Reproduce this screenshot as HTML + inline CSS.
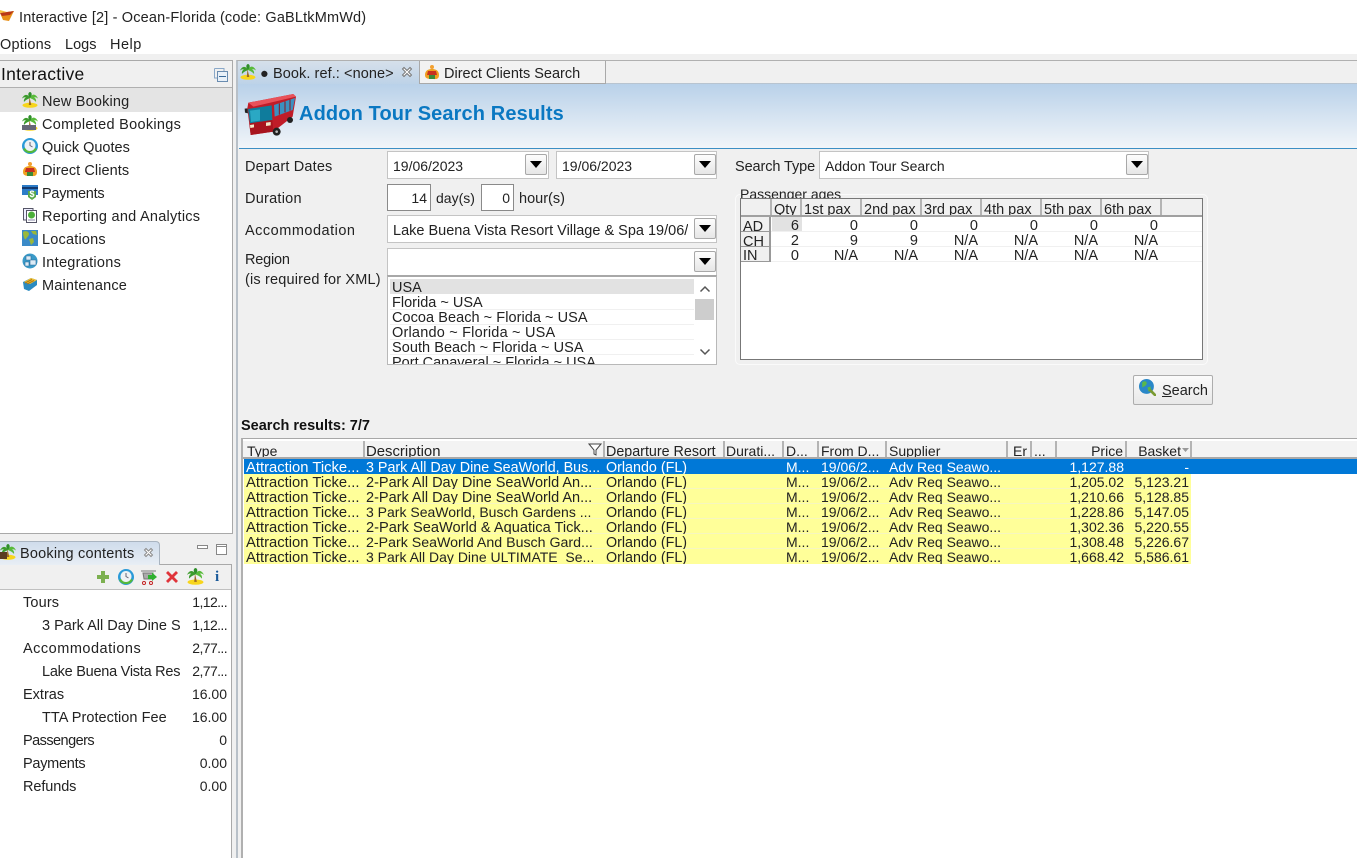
<!DOCTYPE html>
<html><head><meta charset="utf-8"><title>Interactive</title>
<style>
html,body{margin:0;padding:0;background:#fff}
#p{position:relative;width:1357px;height:858px;overflow:hidden;background:#fff;font:14.5px/18px "Liberation Sans",sans-serif;color:#222}
#p div{position:absolute;box-sizing:border-box}
.t{white-space:nowrap}
.r{text-align:right}
.n{font-size:14px;line-height:16px}
.ic{position:absolute}
.combo{background:#fff;border:1px solid #c4c4c4}
.btn{width:22px;height:21px;background:linear-gradient(#fdfdfd,#e6e6e6);border:1px solid #a8a8a8;border-radius:2px}
.btn:after{content:"";position:absolute;left:4px;top:6px;border-left:6px solid transparent;border-right:6px solid transparent;border-top:7px solid #000}
.row{left:0;height:15px;overflow:hidden;line-height:18px;white-space:nowrap}
.row.g{font-size:14px;line-height:16px}
.a{font-size:14.8px}
.row.g .a,.row.g div[style*="font-size"]{line-height:18px}
.hc{height:16px;overflow:hidden;line-height:22px;white-space:nowrap;top:0;border-right:2px solid #b4b4b4}
.hc.g{font-size:14px;line-height:20px}
.rh{left:0;top:0;width:30px;height:15px;background:#f0f0f0;border-right:2px solid #999;border-bottom:1px solid #999;padding-left:2px;line-height:20px;overflow:hidden}
</style></head><body>
<svg width="0" height="0" style="position:absolute">
<defs>
<symbol id="palm" viewBox="0 0 16 16">
<ellipse cx="8" cy="13.300" rx="7.500" ry="2.500" fill="#f7d51d"/>
<path d="M7.500 5 9.300 13H6.800Z" fill="#9c6a22"/>
<path d="M8 6C6 1.500 2 2 0 6.500 2 5 3 5 4 5.500 2.500 6 1.500 8 2 10 4 7.500 6 7 8 6Z" fill="#3c9c2c"/>
<path d="M8 6C10 1 14 2 16 6.500 14 5 13 5 12 5.500 13.500 6 14.500 8 14 10 12 7.500 10 7 8 6Z" fill="#58bb3a"/>
<path d="M8 6C5.500 3 6 .5 8 0 10 .5 10.500 3 8 6Z" fill="#2f8f2a"/>
</symbol>
<symbol id="clock" viewBox="0 0 16 16">
<circle cx="8" cy="8" r="8" fill="#2a9ad8"/>
<path d="M1 11A8 8 0 0 0 15 11L12 9.500A4.500 4.500 0 0 1 4 9.500Z" fill="#55b83a"/>
<circle cx="8" cy="7.500" r="5.500" fill="#eef2f5"/>
<path d="M8 4V7.500L10.500 9" stroke="#667" fill="none"/>
</symbol>
<symbol id="client" viewBox="0 0 16 16">
<circle cx="8" cy="3" r="2" fill="#f2a030"/>
<path d="M1 11C1 6 5 5 8 5S15 6 15 11 11 15 8 15 1 15 1 11Z" fill="#f0a020"/>
<path d="M4 7H12L13 11H3Z" fill="#c83020"/>
<path d="M5 11H11V15H5Z" fill="#3a8a3a"/>
</symbol>
<symbol id="pay" viewBox="0 0 16 16">
<path d="M0 1H16V11H0Z" fill="#2c7cc8"/>
<path d="M0 3H16V5H0Z" fill="#123a70"/>
<path d="M6 7H14V13L10 16 6 13Z" fill="#58a848"/>
<text x="10" y="13" font-size="9" font-weight="bold" text-anchor="middle" fill="#fff" font-family="Liberation Sans">$</text>
</symbol>
<symbol id="report" viewBox="0 0 16 16">
<path d="M1.500 1.500H11V13H1.500Z" fill="#eef" stroke="#556"/>
<path d="M4.500 3.500H14.500V15.500H4.500Z" fill="#fff" stroke="#556"/>
<circle cx="9.500" cy="8" r="3.500" fill="#4cb03a"/>
<path d="M6 13H13" stroke="#88a"/>
</symbol>
<symbol id="globe" viewBox="0 0 16 16">
<path d="M0 0H16V16H0Z" fill="#3a8ac8"/>
<path d="M1 2C4 0 7 2 7 4S5 7 4 9 1 6 1 2ZM9 1 14 1 15 5 11 4ZM7 9 11 8 12 12 9 15Z" fill="#9ab83a"/>
</symbol>
<symbol id="integ" viewBox="0 0 16 16">
<circle cx="8" cy="8" r="7.500" fill="#3a9ac8"/>
<path d="M4 3H9V7H4ZM8 7H14V12H8ZM3 9H7V13H3Z" fill="#dcebf5" stroke="#2a6a98" stroke-width=".6"/>
</symbol>
<symbol id="maint" viewBox="0 0 16 16">
<path d="M1 6 9 2 15 4 15 9 7 15 2 13Z" fill="#2a8ac0"/>
<path d="M2 6 9 2 15 4 8 8Z" fill="#f2c030"/>
<path d="M3 7 10 3.500M5 8 12 4.500" stroke="#b07810"/>
</symbol>
<symbol id="glass" viewBox="0 0 16 16">
<circle cx="7" cy="7" r="7" fill="#2a88c8"/>
<path d="M3 3C6 1 8 3 7 5S4 7 3 8ZM8 8 11 7 11 10 9 12Z" fill="#5ab84a"/>
<path d="M10 10 16 16" stroke="#7a9a30" stroke-width="2.500"/>
</symbol>
</defs>
</svg>
<div id="p">
<!-- title -->
<svg class="ic" style="left:0;top:9px" width="15" height="14" viewBox="0 0 15 14"><path d="M0 4 14 2 9 12 3 11Z" fill="#e89018"/><path d="M0 4 14 2 10 6 2 7Z" fill="#b83818"/><path d="M0 1 7 3 0 4Z" fill="#f4c040"/></svg>
<div class="t" style="left:19px;top:9px;letter-spacing:.16px">Interactive [2] - Ocean-Florida (code: GaBLtkMmWd)</div>
<div class="t" style="left:0;top:36px;letter-spacing:.2px">Options</div>
<div class="t" style="left:65px;top:36px">Logs</div>
<div class="t" style="left:110px;top:36px;letter-spacing:.5px">Help</div>
<div style="left:0;top:54px;width:1357px;height:804px;background:#f0f0f0"></div>

<!-- left top panel -->
<div style="left:0;top:60px;width:233px;height:474px;background:#fff;border:1px solid #a9a9a9;border-left:0"></div>
<div style="left:0;top:61px;width:232px;height:27px;background:#f0f0f0;border-bottom:1px solid #b0b0b0"></div>
<div class="t" style="left:1px;top:65px;font-size:17.5px;line-height:18px;color:#111;letter-spacing:.25px">Interactive</div>
<svg class="ic" style="left:214px;top:68px" width="14" height="14"><path d="M.5.500H10V3M.500.500V10H3" fill="none" stroke="#8aa8c8"/><rect x="3.500" y="3.500" width="10" height="10" fill="#e8f0f8" stroke="#6a8cb0"/><path d="M5 8.500H12" stroke="#3a6a9a"/></svg>
<div style="left:0;top:88px;width:232px;height:24px;background:#e4e4e4"></div>
<svg class="ic" style="left:22px;top:92px" width="16" height="16"><use href="#palm"/></svg>
<div class="t" style="left:42px;top:93px;letter-spacing:.18px">New Booking</div>
<svg class="ic" style="left:22px;top:115px" width="16" height="16"><use href="#palm"/><rect y="10" x="0" width="14" height="5" fill="#667"/></svg>
<div class="t" style="left:42px;top:116px;letter-spacing:.3px">Completed Bookings</div>
<svg class="ic" style="left:22px;top:138px" width="16" height="16"><use href="#clock"/></svg>
<div class="t" style="left:42px;top:139px">Quick Quotes</div>
<svg class="ic" style="left:22px;top:161px" width="16" height="16"><use href="#client"/></svg>
<div class="t" style="left:42px;top:162px;letter-spacing:.07px">Direct Clients</div>
<svg class="ic" style="left:22px;top:184px" width="16" height="16"><use href="#pay"/></svg>
<div class="t" style="left:42px;top:185px;letter-spacing:-.27px">Payments</div>
<svg class="ic" style="left:22px;top:207px" width="16" height="16"><use href="#report"/></svg>
<div class="t" style="left:42px;top:208px;letter-spacing:.26px">Reporting and Analytics</div>
<svg class="ic" style="left:22px;top:230px" width="16" height="16"><use href="#globe"/></svg>
<div class="t" style="left:42px;top:231px;letter-spacing:.2px">Locations</div>
<svg class="ic" style="left:22px;top:253px" width="16" height="16"><use href="#integ"/></svg>
<div class="t" style="left:42px;top:254px;letter-spacing:.28px">Integrations</div>
<svg class="ic" style="left:22px;top:276px" width="16" height="16"><use href="#maint"/></svg>
<div class="t" style="left:42px;top:277px;letter-spacing:.18px">Maintenance</div>

<!-- left bottom panel -->
<div style="left:0;top:564px;width:232px;height:294px;background:#fff;border-right:1px solid #a9a9a9"></div>
<div style="left:0;top:564px;width:231px;height:26px;background:#f0f0f0;border-bottom:1px solid #c0c0c0"></div>
<div style="left:0;top:541px;width:160px;height:24px;background:linear-gradient(#cfdceb,#e8eef5);border:1px solid #a9b4c0;border-left:0;border-bottom:0;border-radius:0 4px 0 0"></div>
<div style="left:160px;top:564px;width:72px;height:1px;background:#a9a9a9"></div>
<svg class="ic" style="left:0;top:544px" width="16" height="16"><use href="#palm"/><path d="M0 8H7V15H0Z" fill="#5a3a20"/></svg>
<div class="t" style="left:20px;top:545px;letter-spacing:.2px">Booking contents</div>
<svg class="ic" style="left:143px;top:547px" width="11" height="11"><path d="M1.500 3 3 1.500 5.500 4 8 1.500 9.500 3 7 5.500 9.500 8 8 9.500 5.500 7 3 9.500 1.500 8 4 5.500Z" fill="#fff" stroke="#8a8a8a"/></svg>
<svg class="ic" style="left:197px;top:543px" width="12" height="8"><rect x=".5" y="2.500" width="10" height="3" fill="#fff" stroke="#888"/></svg>
<svg class="ic" style="left:216px;top:544px" width="12" height="12"><rect x=".5" y=".5" width="10" height="10" fill="#fff" stroke="#888"/><path d="M1 2.500H10" stroke="#888"/></svg>
<svg class="ic" style="left:97px;top:571px" width="12" height="12"><path d="M4 0H8V4H12V8H8V12H4V8H0V4H4Z" fill="#7cb050"/></svg>
<svg class="ic" style="left:118px;top:569px" width="16" height="16"><use href="#clock"/></svg>
<svg class="ic" style="left:141px;top:569px" width="16" height="16"><path d="M0 2H15M2 4H12L11 10H3Z" fill="#aaa" stroke="#777"/><circle cx="3" cy="14" r="1.500" fill="#fff" stroke="#c02020"/><circle cx="10" cy="14" r="1.500" fill="#fff" stroke="#c02020"/><path d="M7 6H11V3.500L16 8 11 12V10H7Z" fill="#30b030"/></svg>
<svg class="ic" style="left:166px;top:571px" width="12" height="12"><path d="M2 0 6 4 10 0 12 2 8 6 12 10 10 12 6 8 2 12 0 10 4 6 0 2Z" fill="#e0343a"/></svg>
<svg class="ic" style="left:187px;top:568px" width="17" height="17"><use href="#palm"/></svg>
<div class="t" style="left:215px;top:568px;font:bold 15px/18px 'Liberation Serif',serif;color:#1a5a9a">i</div>
<div class="t" style="left:23px;top:594px;letter-spacing:.15px">Tours</div><div class="t r n" style="left:170px;width:57px;top:594px;letter-spacing:-.6px">1,12...</div>
<div class="t" style="left:42px;top:617px">3 Park All Day Dine S</div><div class="t r n" style="left:170px;width:57px;top:617px;letter-spacing:-.6px">1,12...</div>
<div class="t" style="left:23px;top:640px;letter-spacing:.5px">Accommodations</div><div class="t r n" style="left:170px;width:57px;top:640px;letter-spacing:-.6px">2,77...</div>
<div class="t" style="left:42px;top:663px;letter-spacing:-.25px">Lake Buena Vista Res</div><div class="t r n" style="left:170px;width:57px;top:663px;letter-spacing:-.6px">2,77...</div>
<div class="t" style="left:23px;top:686px">Extras</div><div class="t r n" style="left:170px;width:57px;top:686px">16.00</div>
<div class="t" style="left:42px;top:709px;letter-spacing:.05px">TTA Protection Fee</div><div class="t r n" style="left:170px;width:57px;top:709px">16.00</div>
<div class="t" style="left:23px;top:732px;letter-spacing:-.55px">Passengers</div><div class="t r n" style="left:170px;width:57px;top:732px">0</div>
<div class="t" style="left:23px;top:755px;letter-spacing:-.27px">Payments</div><div class="t r n" style="left:170px;width:57px;top:755px">0.00</div>
<div class="t" style="left:23px;top:778px;letter-spacing:-.1px">Refunds</div><div class="t r n" style="left:170px;width:57px;top:778px">0.00</div>

<!-- main tabs & banner -->
<div style="left:236px;top:60px;width:1121px;height:798px;background:#f0f0f0;border-left:2px solid #b8c0c8"></div>
<div style="left:237px;top:60px;width:1120px;height:1px;background:#b0b0b0"></div>
<div style="left:238px;top:61px;width:1119px;height:23px;background:#f0f0f0;border-bottom:1px solid #b8c4d0"></div>
<div style="left:238px;top:61px;width:181px;height:24px;background:linear-gradient(#d6e0ea,#bcd2e8)"></div>
<div style="left:419px;top:61px;width:187px;height:23px;background:#f2f2f2;border-left:1px solid #a9a9a9;border-right:1px solid #a9a9a9;border-bottom:1px solid #a9a9a9"></div>
<svg class="ic" style="left:240px;top:64px" width="16" height="16"><use href="#palm"/></svg>
<div class="t" style="left:260px;top:65px;letter-spacing:.08px">● Book. ref.: &lt;none&gt;</div>
<svg class="ic" style="left:401px;top:66px" width="12" height="12"><path d="M1.500 3 3 1.500 6 4.500 9 1.500 10.500 3 7.500 6 10.500 9 9 10.500 6 7.500 3 10.500 1.500 9 4.500 6 1.500 3Z" fill="#fff" stroke="#777"/></svg>
<svg class="ic" style="left:424px;top:64px" width="16" height="16"><use href="#client"/></svg>
<div class="t" style="left:444px;top:65px">Direct Clients Search</div>
<div style="left:238px;top:84px;width:1119px;height:64px;background:linear-gradient(#b9d1e9,#f1f5f9)"></div>
<div style="left:239px;top:148px;width:1118px;height:1px;background:#3c8fc4"></div>
<svg class="ic" style="left:240px;top:90px" width="60" height="50" viewBox="0 0 180 150">
<path d="M25 38 160 12 168 20 158 80 100 125 32 135 22 55Z" fill="#c01c28"/>
<path d="M25 38 160 12 168 20 40 50Z" fill="#e8525a"/>
<path d="M24 57 95 46 97 90 30 100Z" fill="#0f7c9c"/>
<path d="M30 62 60 58 60 92 33 96Z" fill="#2aa8c4"/>
<path d="M102 45 165 24 158 60 104 80Z" fill="#3c90c0"/>
<path d="M118 40V74M135 34V67M150 29V62" stroke="#8a1420" stroke-width="3"/>
<path d="M28 100 97 90 100 125 32 135Z" fill="#a8141e"/>
<path d="M30 105 42 103 42 112 31 114ZM78 98 92 96 92 106 78 108Z" fill="#f2e8c8"/>
<circle cx="110" cy="125" r="12" fill="#222"/><circle cx="110" cy="125" r="4" fill="#bbb"/>
<circle cx="150" cy="90" r="9" fill="#222"/>
<path d="M14 56 22 55 24 70 15 68Z" fill="#222"/>
</svg>
<div class="t" style="left:299px;top:102px;font:bold 20px/24px 'Liberation Sans',sans-serif;color:#0a78c2;letter-spacing:.12px">Addon Tour Search Results</div>

<!-- form -->
<div class="t" style="left:245px;top:158px;letter-spacing:.17px">Depart Dates</div>
<div class="combo" style="left:387px;top:151px;width:162px;height:28px"></div><div class="t n" style="left:393px;top:158px">19/06/2023</div><div class="btn" style="left:525px;top:154px"></div>
<div class="combo" style="left:556px;top:151px;width:161px;height:28px"></div><div class="t n" style="left:562px;top:158px">19/06/2023</div><div class="btn" style="left:694px;top:154px"></div>
<div class="t" style="left:245px;top:190px;letter-spacing:.25px">Duration</div>
<div style="left:387px;top:184px;width:44px;height:27px;background:#fff;border:1px solid #8a8a8a"></div><div class="t r n" style="left:390px;width:37px;top:190px">14</div>
<div class="t n" style="left:436px;top:190px">day(s)</div>
<div style="left:481px;top:184px;width:33px;height:27px;background:#fff;border:1px solid #8a8a8a"></div><div class="t r n" style="left:484px;width:26px;top:190px">0</div>
<div class="t" style="left:519px;top:190px">hour(s)</div>
<div class="t" style="left:245px;top:222px;letter-spacing:.5px">Accommodation</div>
<div class="combo" style="left:387px;top:215px;width:330px;height:28px"></div><div class="t" style="left:393px;top:222px;width:295px;overflow:hidden">Lake Buena Vista Resort Village &amp; Spa 19/06/2023</div><div class="btn" style="left:694px;top:218px"></div>
<div class="t" style="left:245px;top:251px;letter-spacing:-.2px">Region</div>
<div class="t" style="left:245px;top:271px;letter-spacing:.17px">(is required for XML)</div>
<div class="combo" style="left:387px;top:248px;width:330px;height:28px"></div><div class="btn" style="left:694px;top:251px"></div>
<div style="left:387px;top:275px;width:330px;height:90px;background:#fff;border:1px solid #b8b8b8;border-top:2px solid #a8a8a8;overflow:hidden">
<div style="left:2px;top:2px;width:304px;height:15px;background:#e2e2e2"></div>
<div style="left:2px;top:32px;width:304px;height:1px;background:#f0f0f0"></div>
<div style="left:2px;top:47px;width:304px;height:1px;background:#f0f0f0"></div>
<div style="left:2px;top:62px;width:304px;height:1px;background:#f0f0f0"></div>
<div style="left:2px;top:77px;width:304px;height:1px;background:#f0f0f0"></div>
<div class="t" style="left:4px;top:2px">USA</div>
<div class="t" style="left:4px;top:17px">Florida ~ USA</div>
<div class="t" style="left:4px;top:32px;letter-spacing:.05px">Cocoa Beach ~ Florida ~ USA</div>
<div class="t" style="left:4px;top:47px;letter-spacing:.2px">Orlando ~ Florida ~ USA</div>
<div class="t" style="left:4px;top:62px;letter-spacing:.05px">South Beach ~ Florida ~ USA</div>
<div style="left:0;top:77px;width:308px;height:11px;overflow:hidden"><div class="t" style="left:4px;top:0">Port Canaveral ~ Florida ~ USA</div></div>
<div style="left:306px;top:0;width:23px;height:88px;background:#fff"></div>
<div style="left:307px;top:22px;width:19px;height:21px;background:#cdcdcd"></div>
<svg class="ic" style="left:311px;top:8px" width="12" height="8"><path d="M1.500 6.500 6 2 10.500 6.500" fill="none" stroke="#555" stroke-width="1.500"/></svg>
<svg class="ic" style="left:311px;top:71px" width="12" height="8"><path d="M1.500 1.500 6 6 10.500 1.500" fill="none" stroke="#555" stroke-width="1.500"/></svg>
</div>

<div class="t" style="left:735px;top:158px;letter-spacing:-.1px">Search Type</div>
<div class="combo" style="left:819px;top:151px;width:330px;height:28px"></div><div class="t n" style="left:825px;top:158px">Addon Tour Search</div><div class="btn" style="left:1126px;top:154px"></div>

<!-- passenger ages -->
<div style="left:735px;top:194px;width:473px;height:171px;border:1px solid #fafafa;border-radius:5px"></div>
<div style="left:740px;top:186px;width:300px;height:12px;overflow:hidden"><div class="t n" style="left:0;top:0">Passenger ages</div></div>
<div style="left:740px;top:198px;width:463px;height:162px;background:#fff;border:1px solid #777;overflow:hidden">
<div style="left:0;top:0;width:461px;height:18px;background:#f0f0f0;border-bottom:2px solid #a0a0a0"></div>
<div class="hc" style="left:0;width:31px"></div>
<div class="hc" style="left:31px;width:30px;padding-left:2px">Qty</div>
<div class="hc" style="left:61px;width:60px;padding-left:2px">1st pax</div>
<div class="hc" style="left:121px;width:60px;padding-left:2px">2nd pax</div>
<div class="hc" style="left:181px;width:60px;padding-left:2px">3rd pax</div>
<div class="hc" style="left:241px;width:60px;padding-left:2px">4th pax</div>
<div class="hc" style="left:301px;width:60px;padding-left:2px">5th pax</div>
<div class="hc" style="left:361px;width:60px;padding-left:2px">6th pax</div>
<div style="left:31px;top:18px;width:30px;height:15px;background:#e2e2e2"></div>
<div style="left:0;top:32px;width:461px;height:1px;background:#f0f0f0"></div>
<div style="left:0;top:47px;width:461px;height:1px;background:#f0f0f0"></div>
<div style="left:0;top:62px;width:461px;height:1px;background:#f0f0f0"></div>
<div class="row" style="top:18px;width:461px">
<div class="rh">AD</div>
<div class="r" style="left:31px;width:27px">6</div><div class="r" style="left:61px;width:56px">0</div><div class="r" style="left:121px;width:56px">0</div><div class="r" style="left:181px;width:56px">0</div><div class="r" style="left:241px;width:56px">0</div><div class="r" style="left:301px;width:56px">0</div><div class="r" style="left:361px;width:56px">0</div></div>
<div class="row" style="top:33px;width:461px">
<div class="rh">CH</div>
<div class="r" style="left:31px;width:27px">2</div><div class="r" style="left:61px;width:56px">9</div><div class="r" style="left:121px;width:56px">9</div><div class="r" style="left:181px;width:56px">N/A</div><div class="r" style="left:241px;width:56px">N/A</div><div class="r" style="left:301px;width:56px">N/A</div><div class="r" style="left:361px;width:56px">N/A</div></div>
<div class="row" style="top:48px;width:461px">
<div class="rh" style="line-height:18px">IN</div>
<div class="r" style="left:31px;width:27px">0</div><div class="r" style="left:61px;width:56px">N/A</div><div class="r" style="left:121px;width:56px">N/A</div><div class="r" style="left:181px;width:56px">N/A</div><div class="r" style="left:241px;width:56px">N/A</div><div class="r" style="left:301px;width:56px">N/A</div><div class="r" style="left:361px;width:56px">N/A</div></div>
</div>

<!-- search btn -->
<div style="left:1133px;top:375px;width:80px;height:30px;background:linear-gradient(#fbfbfb,#e8e8e8);border:1px solid #adadad;border-radius:2px"></div>
<svg class="ic" style="left:1139px;top:379px" width="17" height="17"><use href="#glass"/></svg>
<div class="t" style="left:1162px;top:382px"><span style="text-decoration:underline">S</span>earch</div>

<!-- results -->
<div class="t" style="left:241px;top:417px;font-weight:bold;color:#111">Search results: 7/7</div>
<div style="left:241px;top:438px;width:1116px;height:420px;background:#fff;border-left:2px solid #b0b0b0;border-top:1px solid #a8a8a8"></div>
<div style="left:243px;top:441px;width:1114px;height:18px;background:#f3f3f3;border-bottom:2px solid #a8a8a8"></div>
<div class="hc g" style="left:243px;top:441px;width:122px;padding-left:4px">Type</div>
<div class="hc" style="left:365px;top:441px;width:240px;padding-left:1px;font-size:14.9px">Description</div>
<svg class="ic" style="left:588px;top:443px" width="14" height="13"><path d="M1 1H13L8 7V12L6 11V7Z" fill="#fff" stroke="#444"/></svg>
<div class="hc" style="left:605px;top:441px;width:120px;padding-left:1px;font-size:14.3px">Departure Resort</div>
<div class="hc g" style="left:725px;top:441px;width:59px;padding-left:1px">Durati...</div>
<div class="hc g" style="left:784px;top:441px;width:35px;padding-left:2px">D...</div>
<div class="hc g" style="left:819px;top:441px;width:68px;padding-left:2px">From D...</div>
<div class="hc g" style="left:887px;top:441px;width:121px;padding-left:2px">Supplier</div>
<div class="hc g" style="left:1008px;top:441px;width:24px;padding-left:5px">Er</div>
<div class="hc g" style="left:1032px;top:441px;width:25px;padding-left:2px">...</div>
<div class="hc r g" style="left:1057px;top:441px;width:70px;padding-right:2px">Price</div>
<div class="hc r g" style="left:1127px;top:441px;width:65px;padding-right:9px">Basket</div>
<svg class="ic" style="left:1182px;top:448px" width="8" height="5"><path d="M0 0H7L3.500 4Z" fill="#999"/></svg>

<div style="left:244px;top:459px;width:1113px;height:15px;background:#0078d7"></div>
<div style="left:244px;top:474px;width:947px;height:90px;background:#ffff99"></div>
<div style="left:244px;top:488px;width:947px;height:1px;background:#f6f6c0"></div>
<div style="left:244px;top:503px;width:947px;height:1px;background:#f6f6c0"></div>
<div style="left:244px;top:518px;width:947px;height:1px;background:#f6f6c0"></div>
<div style="left:244px;top:533px;width:947px;height:1px;background:#f6f6c0"></div>
<div style="left:244px;top:548px;width:947px;height:1px;background:#f6f6c0"></div>

<div class="row g" style="top:459px;width:1357px;color:#fff"><div class="a" style="left:246px">Attraction Ticke...</div><div style="left:366px;font-size:14.3px">3 Park All Day Dine SeaWorld, Bus...</div><div style="left:606px;font-size:14.3px">Orlando (FL)</div><div style="left:786px">M...</div><div style="left:821px">19/06/2...</div><div style="left:889px">Adv Req Seawo...</div><div class="r" style="left:1050px;width:74px">1,127.88</div><div class="r" style="left:1130px;width:59px">-</div></div>
<div class="row g" style="top:474px;width:1357px"><div class="a" style="left:246px">Attraction Ticke...</div><div style="left:366px;font-size:14.5px">2-Park All Day Dine SeaWorld An...</div><div style="left:606px;font-size:14.3px">Orlando (FL)</div><div style="left:786px">M...</div><div style="left:821px">19/06/2...</div><div style="left:889px">Adv Req Seawo...</div><div class="r" style="left:1050px;width:74px">1,205.02</div><div class="r" style="left:1120px;width:69px">5,123.21</div></div>
<div class="row g" style="top:489px;width:1357px"><div class="a" style="left:246px">Attraction Ticke...</div><div style="left:366px;font-size:14.5px">2-Park All Day Dine SeaWorld An...</div><div style="left:606px;font-size:14.3px">Orlando (FL)</div><div style="left:786px">M...</div><div style="left:821px">19/06/2...</div><div style="left:889px">Adv Req Seawo...</div><div class="r" style="left:1050px;width:74px">1,210.66</div><div class="r" style="left:1120px;width:69px">5,128.85</div></div>
<div class="row g" style="top:504px;width:1357px"><div class="a" style="left:246px">Attraction Ticke...</div><div style="left:366px">3 Park SeaWorld, Busch Gardens ...</div><div style="left:606px;font-size:14.3px">Orlando (FL)</div><div style="left:786px">M...</div><div style="left:821px">19/06/2...</div><div style="left:889px">Adv Req Seawo...</div><div class="r" style="left:1050px;width:74px">1,228.86</div><div class="r" style="left:1120px;width:69px">5,147.05</div></div>
<div class="row g" style="top:519px;width:1357px"><div class="a" style="left:246px">Attraction Ticke...</div><div style="left:366px;font-size:14.6px">2-Park SeaWorld &amp; Aquatica Tick...</div><div style="left:606px;font-size:14.3px">Orlando (FL)</div><div style="left:786px">M...</div><div style="left:821px">19/06/2...</div><div style="left:889px">Adv Req Seawo...</div><div class="r" style="left:1050px;width:74px">1,302.36</div><div class="r" style="left:1120px;width:69px">5,220.55</div></div>
<div class="row g" style="top:534px;width:1357px"><div class="a" style="left:246px">Attraction Ticke...</div><div style="left:366px;font-size:14.2px">2-Park SeaWorld And Busch Gard...</div><div style="left:606px;font-size:14.3px">Orlando (FL)</div><div style="left:786px">M...</div><div style="left:821px">19/06/2...</div><div style="left:889px">Adv Req Seawo...</div><div class="r" style="left:1050px;width:74px">1,308.48</div><div class="r" style="left:1120px;width:69px">5,226.67</div></div>
<div class="row g" style="top:549px;width:1357px"><div class="a" style="left:246px">Attraction Ticke...</div><div style="left:366px">3 Park All Day Dine ULTIMATE&nbsp; Se...</div><div style="left:606px;font-size:14.3px">Orlando (FL)</div><div style="left:786px">M...</div><div style="left:821px">19/06/2...</div><div style="left:889px">Adv Req Seawo...</div><div class="r" style="left:1050px;width:74px">1,668.42</div><div class="r" style="left:1120px;width:69px">5,586.61</div></div>
</div>
</body></html>
